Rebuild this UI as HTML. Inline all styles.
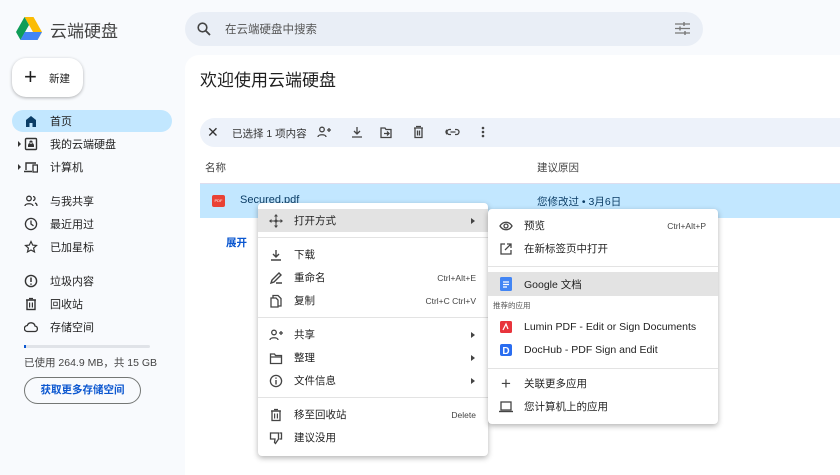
<!DOCTYPE html>
<html><head><meta charset="utf-8"><style>
*{box-sizing:border-box;margin:0;padding:0}
body{width:840px;height:467px;overflow:hidden;background:#f8fafd;font-family:"Liberation Sans","Noto Sans CJK SC",sans-serif;color:#1f1f1f;position:relative;font-size:11px}
.abs{position:absolute}
svg{display:block}
.nav{position:absolute;left:12px;width:160px;height:22px;border-radius:11px;display:flex;align-items:center;font-size:11px}
.nav .ic{width:14px;height:14px;margin-left:12px;margin-right:12px}
.mi{position:absolute;left:0;right:0;height:23px;display:flex;align-items:center;font-size:10.5px;color:#1f1f1f}
.mi .ic{width:14px;height:14px;margin-left:11px;margin-right:11px;display:flex;align-items:center;justify-content:center}
.mi .sc{position:absolute;right:12px;font-size:8.5px;color:#444}
.mi .ar{position:absolute;right:13px;width:0;height:0;border-left:4px solid #444;border-top:3.5px solid transparent;border-bottom:3.5px solid transparent}
.sep{position:absolute;left:0;right:0;height:1px;background:#e3e3e3}
</style></head><body>
<!-- logo -->
<svg class="abs" style="left:16px;top:17px" width="26" height="23" viewBox="0 0 26 23">
<polygon points="8.5,0 17.5,0 26,15 21.5,23" fill="#fbbc04"/>
<polygon points="8.5,0 0,15 4.5,23 13,8" fill="#0f9d58"/>
<polygon points="4.5,23 21.5,23 26,15 8.8,15" fill="#4285f4"/>
<polygon points="8.5,0 17.5,0 13,8" fill="#188038" opacity=".0"/>
</svg>
<div class="abs" style="left:50px;top:17px;font-size:17px;color:#444">云端硬盘</div>
<!-- search -->
<div class="abs" style="left:185px;top:12px;width:518px;height:34px;border-radius:17px;background:#e9eef6"></div>
<svg class="abs" style="left:197px;top:22px" width="14" height="14" viewBox="0 0 14 14"><circle cx="5.5" cy="5.5" r="4.3" fill="none" stroke="#444" stroke-width="1.6"/><path d="M8.6 8.6L13 13" stroke="#444" stroke-width="1.8"/></svg>
<div class="abs" style="left:225px;top:21px;font-size:11.5px;color:#555">在云端硬盘中搜索</div>
<svg class="abs" style="left:675px;top:22px" width="15" height="13" viewBox="0 0 15 13"><path d="M0 2h15M0 6.5h15M0 11h15" stroke="#777" stroke-width="1.2"/><path d="M9 0v4M5 4.5v4M10 9v4" stroke="#777" stroke-width="1.4"/></svg>
<!-- new btn -->
<div class="abs" style="left:12px;top:58px;width:71px;height:39px;border-radius:14px;background:#fff;box-shadow:0 1px 3px rgba(0,0,0,.3)"></div>
<div class="abs" style="left:24px;top:65px;font-size:22px;font-weight:300;line-height:24px">+</div>
<div class="abs" style="left:49px;top:71px;font-size:10.5px">新建</div>
<!-- nav -->
<div class="nav" style="top:110px;background:#c2e7ff;font-weight:bold"><svg class="ic" viewBox="0 0 14 14"><path d="M2 13V6l5-4 5 4v7H8.5V9h-3v4z" fill="#0b3d66"/></svg><span style="font-weight:normal">首页</span></div>
<div class="nav" style="top:133px"><span class="abs" style="left:6px;top:8px;border-left:3px solid #333;border-top:3px solid transparent;border-bottom:3px solid transparent"></span><svg class="ic" viewBox="0 0 14 14"><rect x="1.5" y="1.5" width="11" height="11" rx="1" fill="none" stroke="#333" stroke-width="1.4"/><path d="M4 10h6V8.5a3 3 0 0 0-6 0z M7 3.5a1.6 1.6 0 1 1 0 3.2a1.6 1.6 0 1 1 0-3.2" fill="#333"/></svg>我的云端硬盘</div>
<div class="nav" style="top:156px"><span class="abs" style="left:6px;top:8px;border-left:3px solid #333;border-top:3px solid transparent;border-bottom:3px solid transparent"></span><svg class="ic" viewBox="0 0 14 14"><path d="M2 10V3h10M0 11.5h8" stroke="#333" stroke-width="1.4" fill="none"/><rect x="9" y="5" width="4.5" height="7" fill="none" stroke="#333" stroke-width="1.3"/></svg>计算机</div>
<div class="nav" style="top:190px"><svg class="ic" viewBox="0 0 14 14"><circle cx="5" cy="4.5" r="2.3" fill="none" stroke="#333" stroke-width="1.3"/><path d="M1 12c0-3 8-3 8 0M9 2.5a2 2 0 0 1 0 4M11 9c1.5.5 2 1.5 2 3" fill="none" stroke="#333" stroke-width="1.3"/></svg>与我共享</div>
<div class="nav" style="top:213px"><svg class="ic" viewBox="0 0 14 14"><circle cx="7" cy="7" r="5.6" fill="none" stroke="#333" stroke-width="1.3"/><path d="M7 3.5V7l2.5 1.8" fill="none" stroke="#333" stroke-width="1.3"/></svg>最近用过</div>
<div class="nav" style="top:236px"><svg class="ic" viewBox="0 0 14 14"><path d="M7 1.5l1.7 3.6 3.8.4-2.9 2.6.9 3.8L7 10l-3.5 1.9.9-3.8L1.5 5.5l3.8-.4z" fill="none" stroke="#333" stroke-width="1.2"/></svg>已加星标</div>
<div class="nav" style="top:270px"><svg class="ic" viewBox="0 0 14 14"><circle cx="7" cy="7" r="5.6" fill="none" stroke="#333" stroke-width="1.4"/><path d="M7 3.5v4.5M7 9.5v1.3" stroke="#333" stroke-width="1.5"/></svg>垃圾内容</div>
<div class="nav" style="top:293px"><svg class="ic" viewBox="0 0 14 14"><path d="M2 3h10M5 1.5h4" stroke="#333" stroke-width="1.3"/><rect x="3" y="3" width="8" height="9.5" fill="none" stroke="#333" stroke-width="1.4"/><path d="M5.6 5.5v5M8.4 5.5v5" stroke="#333" stroke-width="1.2"/></svg>回收站</div>
<div class="nav" style="top:316px"><svg class="ic" viewBox="0 0 14 14"><path d="M3.5 11.5a3 3 0 0 1-.2-6A4 4 0 0 1 11 6a2.8 2.8 0 0 1 .2 5.5z" fill="none" stroke="#333" stroke-width="1.3"/></svg>存储空间</div>
<div class="abs" style="left:24px;top:345px;width:126px;height:3px;background:#e0e3e8;border-radius:2px"></div>
<div class="abs" style="left:24px;top:345px;width:2px;height:3px;background:#0b57d0"></div>
<div class="abs" style="left:24px;top:355px;font-size:10.5px;color:#444">已使用 264.9 MB，共 15 GB</div>
<div class="abs" style="left:24px;top:377px;width:117px;height:27px;border:1px solid #747775;border-radius:14px;font-size:10.5px;color:#0b57d0;text-align:center;line-height:25px;font-weight:bold">获取更多存储空间</div>
<!-- main -->
<div class="abs" style="left:185px;top:55px;width:660px;height:420px;background:#fff;border-radius:14px 0 0 0"></div>
<div class="abs" style="left:200px;top:66px;font-size:17px;color:#1f1f1f">欢迎使用云端硬盘</div>
<div class="abs" style="left:200px;top:118px;width:640px;height:29px;background:#edf2fa;border-radius:15px 0 0 15px"></div>
<div class="abs" style="left:207px;top:124px;font-size:14px;color:#333">✕</div>
<div class="abs" style="left:232px;top:126px;font-size:10.5px;color:#333">已选择 1 项内容</div>
<svg class="abs" style="left:317px;top:125px" width="120" height="14" viewBox="0 0 120 14">
<g fill="none" stroke="#444" stroke-width="1.3"><circle cx="5" cy="4.5" r="2.3"/><path d="M1 12c0-3 8-3 8 0M10 5h4M12 3v4"/>
<path d="M40 2v7M37 6l3 3 3-3M35 12h10"/>
<path d="M64 3h4l1 1.5h5v8H64z M67 8.5h5M70 6.5l2 2-2 2"/>
<path d="M97 3h9M99 1.5h5M98 3v9.5h7V3M100.5 5.5v5M102.5 5.5v5"/>
<path d="M131 4.5h-2a2.5 2.5 0 0 0 0 5h2M135 4.5h2a2.5 2.5 0 0 1 0 5h-2M130 7h6"/></g>
</svg>
<svg class="abs" style="left:445px;top:125px" width="14" height="14" viewBox="0 0 14 14"><path d="M4 6.5h2v2H4zM8 6.5h2v2H8z" fill="#444"/><path d="M2 4.5a2.5 2.5 0 0 1 0 5h0M12 9.5" fill="none"/><path d="M4.5 4.5h-1a2.5 2.5 0 0 0 0 5h1M9.5 4.5h1a2.5 2.5 0 0 1 0 5h-1M5 7h4" stroke="#444" stroke-width="1.3" fill="none"/></svg>
<div class="abs" style="left:447px;top:125px;width:14px;height:14px;background:#edf2fa"></div>
<svg class="abs" style="left:446px;top:125px" width="14" height="14" viewBox="0 0 14 14"><path d="M5 4.5h-1.5a2.5 2.5 0 0 0 0 5H5M9 4.5h1.5a2.5 2.5 0 0 1 0 5H9M4.5 7h5" stroke="#444" stroke-width="1.3" fill="none"/></svg>
<svg class="abs" style="left:480px;top:125px" width="6" height="14" viewBox="0 0 6 14"><circle cx="3" cy="3" r="1.3" fill="#444"/><circle cx="3" cy="7" r="1.3" fill="#444"/><circle cx="3" cy="11" r="1.3" fill="#444"/></svg>
<div class="abs" style="left:205px;top:160px;font-size:10.5px;color:#444">名称</div>
<div class="abs" style="left:537px;top:160px;font-size:10.5px;color:#444">建议原因</div>
<div class="abs" style="left:200px;top:183px;width:640px;height:1px;background:#dde"></div>
<div class="abs" style="left:200px;top:184px;width:640px;height:34px;background:#c2e7ff"></div>
<div class="abs" style="left:212px;top:195px;width:13px;height:12px;background:#e94235;border-radius:2px;color:#fff;font-size:4px;text-align:center;line-height:12px">PDF</div>
<div class="abs" style="left:240px;top:194px;font-size:11px;color:#0b3d66">Secured.pdf</div>
<div class="abs" style="left:537px;top:194px;font-size:10.5px;color:#0b3d66">您修改过 • 3月6日</div>
<div class="abs" style="left:226px;top:235px;font-size:10.5px;color:#0b57d0;font-weight:bold">展开</div>
<!-- menu1 -->
<div class="abs" style="left:258px;top:203px;width:230px;height:253px;background:#fff;border-radius:4px;box-shadow:0 2px 6px rgba(0,0,0,.3)">
<div class="mi" style="top:6px;background:#e3e3e3"><span class="ic"><svg width="14" height="14" viewBox="0 0 14 14"><path d="M7 0l2 2.5H5zM7 14l2-2.5H5zM0 7l2.5-2v4zM14 7l-2.5-2v4z" fill="#444"/><circle cx="7" cy="7" r="1.5" fill="#444"/><path d="M7 2v10M2 7h10" stroke="#444" stroke-width="1"/></svg></span>打开方式<span class="ar"></span></div>
<div class="sep" style="top:34px"></div>
<div class="mi" style="top:40px"><span class="ic"><svg width="14" height="14" viewBox="0 0 14 14"><path d="M7 2v7M4 6l3 3 3-3M2 12h10" stroke="#444" stroke-width="1.4" fill="none"/></svg></span>下载</div>
<div class="mi" style="top:63px"><span class="ic"><svg width="14" height="14" viewBox="0 0 14 14"><path d="M2 12l1-3 7-7 2 2-7 7zM7 12h6" stroke="#444" stroke-width="1.4" fill="none"/></svg></span>重命名<span class="sc">Ctrl+Alt+E</span></div>
<div class="mi" style="top:86px"><span class="ic"><svg width="14" height="14" viewBox="0 0 14 14"><path d="M4 3.5V1.5h5l3 3v7.5H9M2 4h5l2 2v7H2z" stroke="#444" stroke-width="1.3" fill="none"/></svg></span>复制<span class="sc">Ctrl+C Ctrl+V</span></div>
<div class="sep" style="top:114px"></div>
<div class="mi" style="top:120px"><span class="ic"><svg width="14" height="14" viewBox="0 0 14 14"><circle cx="5" cy="4.5" r="2.3" fill="none" stroke="#444" stroke-width="1.3"/><path d="M1 12c0-3 8-3 8 0M10 5h4M12 3v4" stroke="#444" stroke-width="1.3" fill="none"/></svg></span>共享<span class="ar"></span></div>
<div class="mi" style="top:143px"><span class="ic"><svg width="14" height="14" viewBox="0 0 14 14"><path d="M1.5 3h4l1 1.5h6v8h-11zM1.5 6h11" stroke="#444" stroke-width="1.3" fill="none"/></svg></span>整理<span class="ar"></span></div>
<div class="mi" style="top:166px"><span class="ic"><svg width="14" height="14" viewBox="0 0 14 14"><circle cx="7" cy="7" r="5.6" fill="none" stroke="#444" stroke-width="1.3"/><path d="M7 6v4.5M7 3.5v1.3" stroke="#444" stroke-width="1.4"/></svg></span>文件信息<span class="ar"></span></div>
<div class="sep" style="top:194px"></div>
<div class="mi" style="top:200px"><span class="ic"><svg width="14" height="14" viewBox="0 0 14 14"><path d="M2 3h10M5 1.5h4" stroke="#444" stroke-width="1.3"/><rect x="3" y="3" width="8" height="9.5" fill="none" stroke="#444" stroke-width="1.3"/><path d="M5.6 5.5v5M8.4 5.5v5" stroke="#444" stroke-width="1.2"/></svg></span>移至回收站<span class="sc">Delete</span></div>
<div class="mi" style="top:223px"><span class="ic"><svg width="14" height="14" viewBox="0 0 14 14"><path d="M1.5 2h8v6l-3 4.5-1-1 .5-3.5H1.5zM10.5 2h2v6h-2" stroke="#444" stroke-width="1.3" fill="none"/></svg></span>建议没用</div>
</div>
<!-- menu2 -->
<div class="abs" style="left:488px;top:209px;width:230px;height:215px;background:#fff;border-radius:4px;box-shadow:0 2px 6px rgps(0,0,0,.3);box-shadow:0 2px 6px rgba(0,0,0,.3)">
<div class="mi" style="top:5px"><span class="ic"><svg width="14" height="14" viewBox="0 0 14 14"><path d="M1 7c3-5 9-5 12 0c-3 5-9 5-12 0z" fill="none" stroke="#444" stroke-width="1.3"/><circle cx="7" cy="7" r="2" fill="none" stroke="#444" stroke-width="1.3"/></svg></span>预览<span class="sc">Ctrl+Alt+P</span></div>
<div class="mi" style="top:28px"><span class="ic"><svg width="14" height="14" viewBox="0 0 14 14"><path d="M6 2H2v10h10V8M8 2h4v4M12 2L6 8" stroke="#444" stroke-width="1.3" fill="none"/></svg></span>在新标签页中打开</div>
<div class="sep" style="top:57px"></div>
<div class="mi" style="top:63px;background:#e3e3e3;height:24px"><span class="ic"><svg width="12" height="14" viewBox="0 0 12 14"><rect width="12" height="14" rx="1.5" fill="#4285f4"/><path d="M3 5h6M3 7.5h6M3 10h4" stroke="#fff" stroke-width="1.2"/></svg></span>Google 文档</div>
<div class="abs" style="left:5px;top:91px;font-size:7.5px;color:#555">推荐的应用</div>
<div class="mi" style="top:106px"><span class="ic"><svg width="12" height="12" viewBox="0 0 12 12"><rect width="12" height="12" rx="1.5" fill="#e8343c"/><path d="M3 9l3-6 2 5" stroke="#fff" stroke-width="1.2" fill="none"/></svg></span>Lumin PDF - Edit or Sign Documents</div>
<div class="mi" style="top:129px"><span class="ic"><svg width="12" height="12" viewBox="0 0 12 12"><rect width="12" height="12" rx="2" fill="#2a6df0"/><text x="6" y="10" font-size="10" font-family="Liberation Sans" font-weight="bold" fill="#fff" text-anchor="middle">D</text></svg></span>DocHub - PDF Sign and Edit</div>
<div class="sep" style="top:159px"></div>
<div class="mi" style="top:163px"><span class="ic" style="font-size:17px;color:#444">+</span>关联更多应用</div>
<div class="mi" style="top:186px"><span class="ic"><svg width="14" height="12" viewBox="0 0 14 12"><rect x="2" y="1" width="10" height="8" fill="none" stroke="#444" stroke-width="1.3"/><path d="M0 10.5h14" stroke="#444" stroke-width="1.4"/></svg></span>您计算机上的应用</div>
</div>
</body></html>
